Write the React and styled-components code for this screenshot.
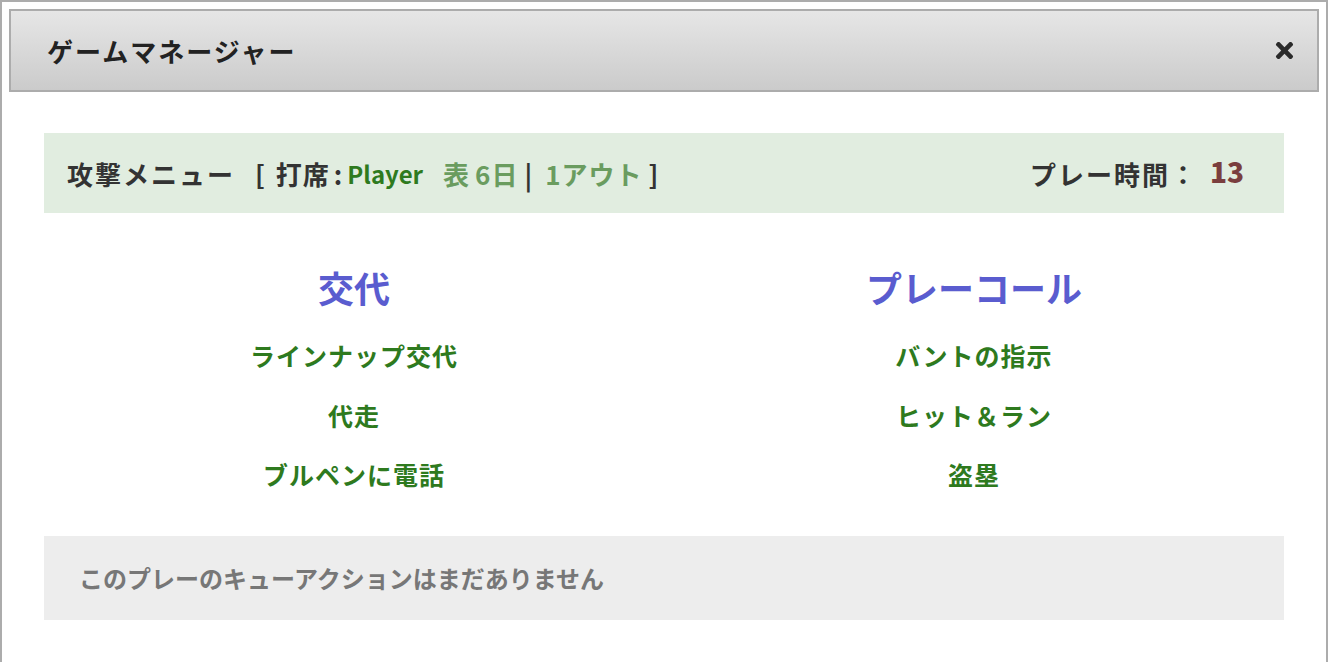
import React from "react";
import styled, { createGlobalStyle } from "styled-components";
import { FaTimes } from "react-icons/fa";

const GlobalStyle = createGlobalStyle`
  html, body {
    margin: 0;
    padding: 0;
    overflow: hidden;
    background: #fff;
    font-family: "Noto Sans CJK JP", "Noto Sans", sans-serif;
  }
`;

const Dialog = styled.div`
  box-sizing: border-box;
  width: 1328px;
  height: 680px;
  border: 2px solid #acacac;
  padding: 7px;
  background: #fff;
`;

const Header = styled.header`
  box-sizing: border-box;
  height: 83px;
  display: flex;
  align-items: center;
  justify-content: space-between;
  padding: 0 20px 0 36px;
  border: 2px solid #acacac;
  background: linear-gradient(to bottom, #e6e6e6 0%, #cbcbcb 100%);

  h1 {
    margin: 0;
    font-size: 26px;
    letter-spacing: 2px;
    font-weight: 700;
    color: #222;
  }

  svg {
    font-size: 25px;
    color: #2a2a2a;
  }
`;

const Body = styled.section`
  padding: 41px 35px 0;
  display: flex;
  flex-direction: column;
`;

const StatusBar = styled.div`
  box-sizing: border-box;
  height: 80px;
  display: flex;
  align-items: center;
  justify-content: space-between;
  padding: 0 40px 0 23px;
  background: #e1ede0;
  font-size: 26px;
  font-weight: 700;
  color: #333;
`;

const Left = styled.div`
  display: flex;
  align-items: center;
  white-space: pre;
`;

const Tone = styled.span`
  letter-spacing: ${(p) => (p.$latin ? "0" : p.$wide ? "2px" : "1px")};
  margin-left: ${(p) => p.$gap || 0}px;
  font-size: ${(p) => (p.$latin ? "24px" : "inherit")};
  color: ${(p) => (p.$tone === "dark" ? "#2e7a1e" : p.$tone === "light" ? "#6a9c5f" : "#333")};
`;

const Timer = styled.div`
  display: flex;
  align-items: center;
  gap: 12px;
  letter-spacing: 2px;

  b {
    font-size: 28px;
    color: #7a3e3e;
    margin-top: -4px;
    letter-spacing: 0;
  }
`;

const Columns = styled.div`
  display: grid;
  grid-template-columns: 1fr 1fr;
  padding: 50px 0 31px;
`;

const Column = styled.div`
  display: flex;
  flex-direction: column;
  align-items: center;
`;

const ColumnTitle = styled.h2`
  margin: 0 0 15px;
  font-size: 36px;
  font-weight: 700;
  color: #5a5ccf;
  line-height: 48px;
`;

const Action = styled.a`
  font-size: 25px;
  letter-spacing: 1px;
  font-weight: 700;
  color: #2e7a1e;
  line-height: 59.5px;
  cursor: pointer;
`;

const Queue = styled.div`
  box-sizing: border-box;
  height: 84px;
  display: flex;
  align-items: center;
  padding: 0 35px;
  background: #ededed;
  font-size: 24px;
  font-weight: 700;
  color: #777;
`;

const left = ["ラインナップ交代", "代走", "ブルペンに電話"];
const right = ["バントの指示", "ヒット＆ラン", "盗塁"];

export default function App() {
  return (
    <>
      <GlobalStyle />
      <Dialog>
        <Header>
          <h1>ゲームマネージャー</h1>
          <FaTimes />
        </Header>
        <Body>
          <StatusBar>
            <Left>
              <Tone $wide>攻撃メニュー</Tone>
              <Tone $gap={20}>[</Tone>
              <Tone $gap={10}>打席</Tone>
              <Tone $gap={4}>:</Tone>
              <Tone $tone="dark" $latin $gap={4}>Player</Tone>
              <Tone $tone="light" $gap={20}>表</Tone>
              <Tone $tone="light" $gap={5}>6日</Tone>
              <Tone $gap={6}>|</Tone>
              <Tone $tone="light" $gap={12}>1</Tone>
              <Tone $tone="light" $gap={0}>アウト</Tone>
              <Tone $gap={6}>]</Tone>
            </Left>
            <Timer>
              <span>プレー時間：</span>
              <b>13</b>
            </Timer>
          </StatusBar>
          <Columns>
            <Column>
              <ColumnTitle>交代</ColumnTitle>
              {left.map((t) => (
                <Action key={t}>{t}</Action>
              ))}
            </Column>
            <Column>
              <ColumnTitle>プレーコール</ColumnTitle>
              {right.map((t) => (
                <Action key={t}>{t}</Action>
              ))}
            </Column>
          </Columns>
          <Queue>このプレーのキューアクションはまだありません</Queue>
        </Body>
      </Dialog>
    </>
  );
}
